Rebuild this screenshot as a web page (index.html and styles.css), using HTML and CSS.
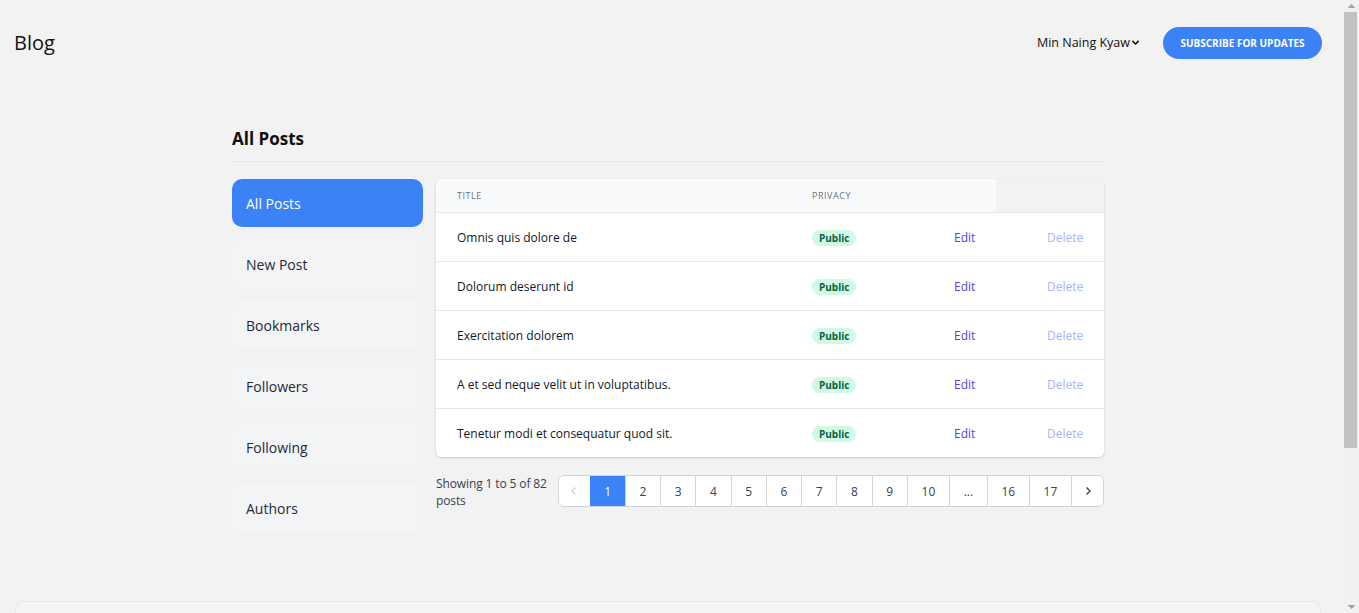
FILE: index.html
```html
<!DOCTYPE html>
<html lang="en">
<head>
<meta charset="utf-8">
<title>Blog</title>
<link rel="stylesheet" href="styles.css">
</head>
<body>
<div class="app">
<header class="topbar">
  <div class="brand">Blog</div>
  <div class="topbar-right">
    <div class="user">Min Naing Kyaw<svg class="chev" viewBox="0 0 10 10" width="9" height="9"><path d="M1.5 3.2 5 6.7 8.5 3.2" fill="none" stroke="#111" stroke-width="1.6"/></svg></div>
    <button class="subscribe">SUBSCRIBE FOR UPDATES</button>
  </div>
</header>

<main class="page">
  <h1 class="page-title">All Posts</h1>
  <div class="layout">
    <nav class="side">
      <a class="side-item active">All Posts</a>
      <a class="side-item">New Post</a>
      <a class="side-item">Bookmarks</a>
      <a class="side-item">Followers</a>
      <a class="side-item">Following</a>
      <a class="side-item">Authors</a>
    </nav>
    <section class="content">
      <div class="table">
        <div class="thead">
          <div class="thead-bg">
            <div class="th th-title">Title</div>
            <div class="th">Privacy</div>
          </div>
        </div>
        <div class="row"><div class="cell-title">Omnis quis dolore de</div><div><span class="badge">Public</span></div><a class="edit">Edit</a><a class="del">Delete</a></div>
        <div class="row"><div class="cell-title">Dolorum deserunt id</div><div><span class="badge">Public</span></div><a class="edit">Edit</a><a class="del">Delete</a></div>
        <div class="row"><div class="cell-title">Exercitation dolorem</div><div><span class="badge">Public</span></div><a class="edit">Edit</a><a class="del">Delete</a></div>
        <div class="row"><div class="cell-title">A et sed neque velit ut in voluptatibus.</div><div><span class="badge">Public</span></div><a class="edit">Edit</a><a class="del">Delete</a></div>
        <div class="row"><div class="cell-title">Tenetur modi et consequatur quod sit.</div><div><span class="badge">Public</span></div><a class="edit">Edit</a><a class="del">Delete</a></div>
      </div>
      <div class="pager">
        <p class="showing">Showing <span class="num">1</span> to <span class="num">5</span> of <span class="num">82</span> posts</p>
        <div class="pages">
          <a class="pg arrow"><svg viewBox="0 0 12 12" width="12" height="12"><path d="M7.5 2.5 4 6l3.5 3.5" fill="none" stroke="#d1d5db" stroke-width="1.4"/></svg></a>
          <a class="pg current">1</a>
          <a class="pg">2</a>
          <a class="pg">3</a>
          <a class="pg">4</a>
          <a class="pg">5</a>
          <a class="pg">6</a>
          <a class="pg">7</a>
          <a class="pg">8</a>
          <a class="pg">9</a>
          <a class="pg">10</a>
          <a class="pg">...</a>
          <a class="pg">16</a>
          <a class="pg">17</a>
          <a class="pg arrow"><svg viewBox="0 0 12 12" width="12" height="12"><path d="M4.5 2.5 8 6 4.5 9.5" fill="none" stroke="#4b5563" stroke-width="1.6"/></svg></a>
        </div>
      </div>
    </section>
  </div>
</main>

<footer class="footer"></footer>
</div>

<div class="scrollbar" aria-hidden="true">
  <svg class="sb-btn" viewBox="0 0 15 12" width="15" height="12"><path d="M3.5 8h8L7.5 4z" fill="#a3a3a3"/></svg>
  <div class="sb-track"><div class="sb-thumb"></div></div>
  <svg class="sb-btn" viewBox="0 0 15 12" width="15" height="12"><path d="M3.5 4h8L7.5 8z" fill="#a3a3a3"/></svg>
</div>
</body>
</html>
```

FILE: styles.css
```css
* { box-sizing: border-box; }
html, body { margin: 0; padding: 0; }
body {
  background: #f2f2f2;
  font-family: "Open Sans", "Noto Sans", sans-serif;
  color: #111827;
  padding-right: 15px;
}
a { text-decoration: none; cursor: pointer; }

.scrollbar {
  position: fixed;
  top: 0;
  right: 0;
  width: 15px;
  height: 100vh;
  background: #f1f1f1;
  display: flex;
  flex-direction: column;
}
.sb-btn { display: block; flex: none; }
.sb-track { flex: 1; }
.sb-thumb {
  width: 13px;
  height: 436px;
  background: #c1c1c1;
}

.topbar {
  height: 85px;
  display: flex;
  align-items: center;
  justify-content: space-between;
  padding: 0 22px 0 14px;
}
.brand {
  font-size: 20px;
  font-weight: 500;
  color: #111;
}
.topbar-right {
  display: flex;
  align-items: center;
  gap: 23px;
}
.user {
  display: flex;
  align-items: center;
  gap: 1px;
  font-size: 12.5px;
  font-weight: 500;
  color: #111;
}
.subscribe {
  height: 32px;
  width: 159px;
  border: 0;
  border-radius: 16px;
  background: #3b82f6;
  color: #fff;
  font-family: inherit;
  font-size: 10px;
  font-weight: 700;
  padding: 0;
}

.page {
  width: 880px;
  margin: 0 auto;
  padding: 42px 8px 69px 0;
}
.page-title {
  margin: 0;
  font-size: 17px;
  font-weight: 700;
  line-height: 24px;
  padding-bottom: 10px;
  border-bottom: 1px solid #e5e7eb;
  color: #111;
}
.layout {
  display: flex;
  gap: 13px;
  margin-top: 17px;
}
.side {
  width: 191px;
  flex: none;
  display: flex;
  flex-direction: column;
  gap: 13px;
}
.side-item {
  height: 48px;
  display: flex;
  align-items: center;
  padding-left: 14px;
  border-radius: 10px;
  background: #f3f4f6;
  font-size: 14px;
  color: #1f2937;
}
.side-item.active {
  background: #3b82f6;
  color: #fff;
}
.content {
  flex: 1;
}
.table {
  border-radius: 6px;
  overflow: hidden;
  box-shadow: 0 1px 3px rgba(0,0,0,0.12), 0 1px 2px rgba(0,0,0,0.06);
}
.thead {
  height: 34px;
  display: flex;
  border-bottom: 1px solid #e5e7eb;
}
.thead-bg {
  width: 560px;
  background: #f9fafb;
  display: flex;
  align-items: center;
}
.th {
  font-size: 9px;
  text-transform: uppercase;
  letter-spacing: 0.06em;
  color: #6b7280;
}
.th-title {
  padding-left: 21px;
  width: 376px;
}
.row {
  height: 49px;
  background: #fff;
  display: grid;
  grid-template-columns: 376px 142px 93px 1fr;
  align-items: center;
  font-size: 12px;
  border-bottom: 1px solid #e5e7eb;
}
.row:last-child { border-bottom: 0; height: 48px; }
.cell-title {
  padding-left: 21px;
  color: #111827;
}
.badge {
  display: inline-block;
  font-size: 10px;
  font-weight: 700;
  line-height: 16px;
  padding: 0 7px;
  border-radius: 8px;
  background: #d1fae5;
  color: #065f46;
}
.edit { color: #4f46e5; }
.del { color: #a5b4fc; }

.pager {
  display: flex;
  align-items: flex-start;
  margin-top: 18px;
}
.showing {
  flex: 1;
  margin: 0;
  font-size: 12px;
  line-height: 17px;
  color: #374151;
  letter-spacing: -0.01em;
}
.num { font-weight: 500; }
.pages {
  display: flex;
  flex: none;
  height: 32px;
  border: 1px solid #d1d5db;
  border-radius: 6px;
  overflow: hidden;
  background: #fff;
}
.pg {
  display: flex;
  align-items: center;
  justify-content: center;
  padding: 0 13.7px;
  font-size: 12px;
  color: #374151;
  border-left: 1px solid #d1d5db;
}
.pg:first-child { border-left: 0; }
.pg.arrow { padding: 0 9.5px; }
.pg.current {
  background: #3b82f6;
  color: #fff;
  border-left-color: #3b82f6;
}

.footer {
  margin: 0 23px 0 15px;
  height: 230px;
  background: #f3f4f6;
  border: 1px solid #e5e7eb;
  border-bottom: 0;
  border-radius: 8px 8px 0 0;
}
```
